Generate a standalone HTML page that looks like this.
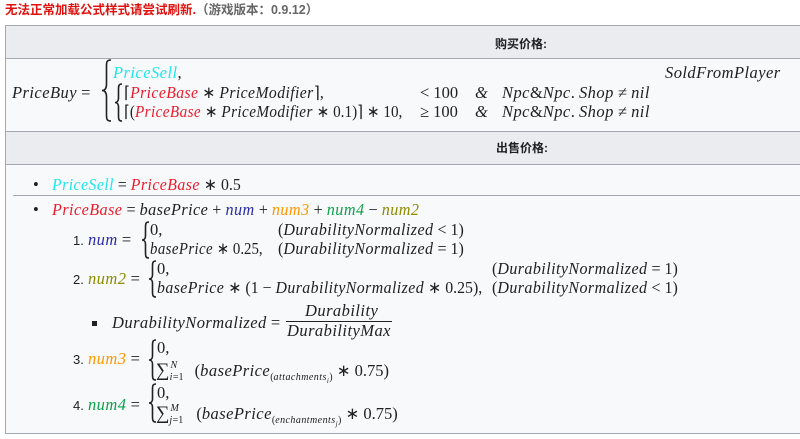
<!DOCTYPE html>
<html><head><meta charset="utf-8"><style>
body{margin:0;width:800px;height:439px;background:#fff;position:relative;overflow:hidden;font-family:"Liberation Serif",serif;font-size:16.5px;color:#202122}
.a{position:absolute;white-space:nowrap;line-height:18px;transform-origin:0 50%}
i{font-style:italic;letter-spacing:.45px}
.c{color:#1fe6f0}.r{color:#ea1c2c}.b{color:#2b2ba8}.o{color:#ff9800}.g{color:#0fa04c}.ol{color:#8c8c00}
.cjk{font-family:"Liberation Sans","Noto Sans CJK SC",sans-serif;font-weight:bold;font-size:12px}
.s{font-family:"Liberation Sans",sans-serif;font-size:13px}
svg{position:absolute;overflow:visible}
svg path{fill:none;stroke:#202122;stroke-width:1.6}
</style></head><body>
<div class="a cjk" style="left:5px;top:1px;color:#e0120f;font-size:12.5px">无法正常加载公式样式请尝试刷新.<span style="color:#666">（游戏版本：0.9.12）</span></div>
<div style="position:absolute;left:5px;top:25px;width:800px;height:407px;border:1px solid #a2a9b1;background:#f8f9fa"></div>
<div style="position:absolute;left:6px;top:26px;width:800px;height:32px;background:#eaecf0;border-bottom:1px solid #a2a9b1"></div>
<div style="position:absolute;left:6px;top:131px;width:800px;height:32px;background:#eaecf0;border-top:1px solid #a2a9b1;border-bottom:1px solid #a2a9b1"></div>
<div class="a cjk" style="left:495px;top:35px">购买价格:</div>
<div class="a cjk" style="left:496px;top:139px">出售价格:</div>

<div class="a" style="left:12px;top:84px"><i>PriceBuy</i> =</div>
<svg style="left:101px;top:60px" width="11" height="61"><path d="M10,0 C5,0 5.5,3 5.5,8 L5.5,24 C5.5,28 4,30.5 1,30.5 C4,30.5 5.5,33 5.5,37 L5.5,53 C5.5,58 5,61 10,61"/></svg>
<div class="a" style="left:113px;top:64px"><i class="c">PriceSell</i>,</div>
<svg style="left:114px;top:84px" width="9" height="37"><path d="M8,0 C4.5,0 4.5,2 4.5,6 L4.5,14 C4.5,17 3,18.5 1,18.5 C3,18.5 4.5,20 4.5,23 L4.5,31 C4.5,35 4.5,37 8,37"/></svg>
<div class="a" style="left:124px;top:84px;transform:scaleX(.95)">⌈<i class="r">PriceBase</i> ∗ <i>PriceModifier</i>⌉,</div>
<div class="a" style="left:124px;top:103px;transform:scaleX(.92)">⌈(<i class="r">PriceBase</i> ∗ <i>PriceModifier</i> ∗ 0.1)⌉ ∗ 10,</div>
<div class="a" style="left:420px;top:84px">&lt; 100</div>
<div class="a" style="left:420px;top:103px">≥ 100</div>
<div class="a" style="left:475px;top:84px"><i>&amp;</i></div>
<div class="a" style="left:475px;top:103px"><i>&amp;</i></div>
<div class="a" style="left:502px;top:84px"><i>Npc</i>&amp;<i>Npc</i>. <i>Shop</i> ≠ <i>nil</i></div>
<div class="a" style="left:502px;top:103px"><i>Npc</i>&amp;<i>Npc</i>. <i>Shop</i> ≠ <i>nil</i></div>
<div class="a" style="left:665px;top:64px"><i>SoldFromPlayer</i></div>

<div class="a" style="left:33px;top:176px">•</div>
<div class="a" style="left:52px;top:176px;transform:scaleX(.96)"><i class="c">PriceSell</i> = <i class="r">PriceBase</i> ∗ 0.5</div>
<div style="position:absolute;left:13px;top:195px;width:790px;height:1px;background:#a2a9b1"></div>
<div class="a" style="left:33px;top:201px">•</div>
<div class="a" style="left:52px;top:201px;transform:scaleX(.98)"><i class="r">PriceBase</i> = <i>basePrice</i> + <i class="b">num</i> + <i class="o">num3</i> + <i class="g">num4</i> − <i class="ol">num2</i></div>

<div class="a" style="left:73px;top:231px"><span class="s">1.</span> <i class="b">num</i> =</div>
<svg style="left:141px;top:222px" width="9" height="36"><path d="M8,0 C4.5,0 4.5,2 4.5,6 L4.5,14 C4.5,16.5 3,18 1,18 C3,18 4.5,19.5 4.5,22 L4.5,30 C4.5,34 4.5,36 8,36"/></svg>
<div class="a" style="left:150px;top:221px">0,</div>
<div class="a" style="left:150px;top:240px;transform:scaleX(.9)"><i>basePrice</i> ∗ 0.25,</div>
<div class="a" style="left:278px;top:221px;transform:scaleX(.97)">(<i>DurabilityNormalized</i> &lt; 1)</div>
<div class="a" style="left:278px;top:240px;transform:scaleX(.97)">(<i>DurabilityNormalized</i> = 1)</div>

<div class="a" style="left:73px;top:270px"><span class="s">2.</span> <i class="ol">num2</i> =</div>
<svg style="left:148px;top:261px" width="9" height="36"><path d="M8,0 C4.5,0 4.5,2 4.5,6 L4.5,14 C4.5,16.5 3,18 1,18 C3,18 4.5,19.5 4.5,22 L4.5,30 C4.5,34 4.5,36 8,36"/></svg>
<div class="a" style="left:157px;top:260px">0,</div>
<div class="a" style="left:157px;top:279px;transform:scaleX(.96)"><i>basePrice</i> ∗ (1 − <i>DurabilityNormalized</i> ∗ 0.25),</div>
<div class="a" style="left:492px;top:260px;transform:scaleX(.97)">(<i>DurabilityNormalized</i> = 1)</div>
<div class="a" style="left:492px;top:279px;transform:scaleX(.97)">(<i>DurabilityNormalized</i> &lt; 1)</div>

<div style="position:absolute;left:92px;top:321px;width:5px;height:5px;background:#202122"></div>
<div class="a" style="left:112px;top:314px"><i>DurabilityNormalized</i> =</div>
<div class="a" style="left:305px;top:302px"><i>Durability</i></div>
<div style="position:absolute;left:286px;top:321px;width:106px;height:1px;background:#202122"></div>
<div class="a" style="left:287px;top:322px"><i>DurabilityMax</i></div>

<div class="a" style="left:73px;top:350px"><span class="s">3.</span> <i class="o">num3</i> =</div>
<svg style="left:148px;top:340px" width="9" height="40"><path d="M8,0 C4.5,0 4.5,2 4.5,6 L4.5,16 C4.5,18.5 3,20 1,20 C3,20 4.5,21.5 4.5,24 L4.5,34 C4.5,38 4.5,40 8,40"/></svg>
<div class="a" style="left:157px;top:339px">0,</div>
<div class="a" style="left:156px;top:362px"><span style="font-size:19px">∑</span><span style="position:relative;font-size:10px;top:-8px;left:1px"><i>N</i></span><span style="position:relative;font-size:10px;top:4px;left:-7px"><i>i</i>=1</span> (<i>basePrice</i><span style="font-size:10px;position:relative;top:4px">(<i>attachments<sub style="font-size:7px">i</sub></i>)</span> ∗ 0.75)</div>

<div class="a" style="left:73px;top:396px"><span class="s">4.</span> <i class="g">num4</i> =</div>
<svg style="left:148px;top:384px" width="9" height="38"><path d="M8,0 C4.5,0 4.5,2 4.5,6 L4.5,15 C4.5,17.5 3,19 1,19 C3,19 4.5,20.5 4.5,23 L4.5,32 C4.5,36 4.5,38 8,38"/></svg>
<div class="a" style="left:157px;top:384px">0,</div>
<div class="a" style="left:156px;top:405px"><span style="font-size:19px">∑</span><span style="position:relative;font-size:10px;top:-8px;left:1px"><i>M</i></span><span style="position:relative;font-size:10px;top:4px;left:-9px"><i>j</i>=1</span> (<i>basePrice</i><span style="font-size:10px;position:relative;top:4px">(<i>enchantments<sub style="font-size:7px">j</sub></i>)</span> ∗ 0.75)</div>
</body></html>
